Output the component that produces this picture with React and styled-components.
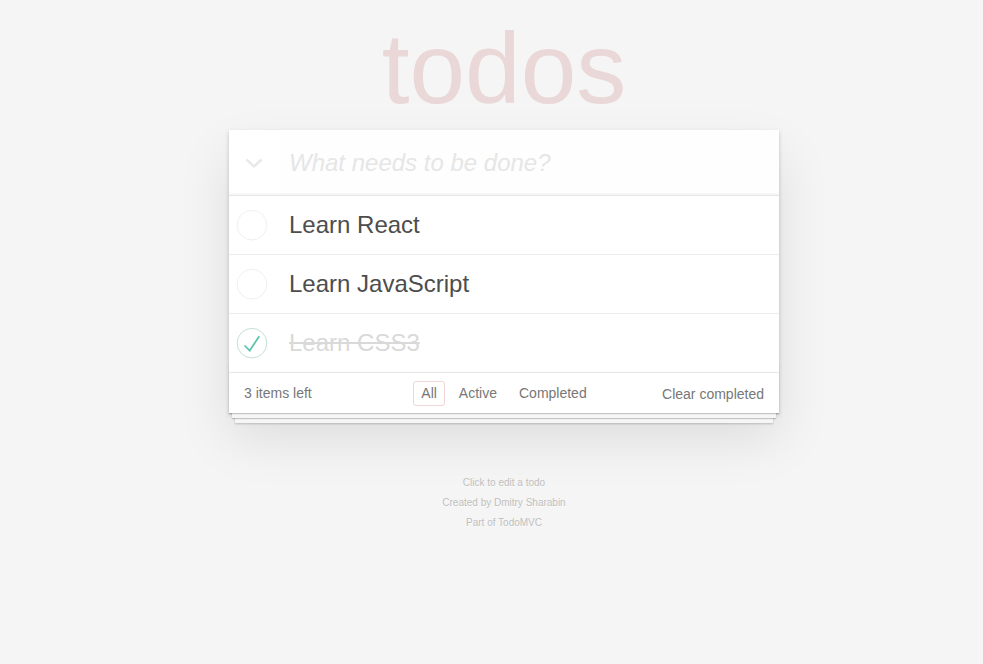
import { useState } from 'react';
import styled, { createGlobalStyle } from 'styled-components';

const GlobalStyle = createGlobalStyle`
  html, body {
    margin: 0;
    padding: 0;
  }
  body {
    font-family: "Liberation Sans", Arial, sans-serif;
    font-size: 14px;
    line-height: 1.4em;
    background: #f5f5f5;
    color: #4d4d4d;
    -webkit-font-smoothing: antialiased;
  }
`;

const Page = styled.div`
  padding: 18px 0 0 25px;
  min-height: 646px;
`;

const Column = styled.div`
  max-width: 550px;
  margin: 0 auto;
`;

const Title = styled.h1`
  margin: 0 0 12px;
  font-size: 100px;
  line-height: 100px;
  font-weight: 100;
  text-align: center;
  color: rgba(175, 47, 47, 0.15);
`;

const TodoApp = styled.section`
  background: #fff;
  box-shadow: 0 2px 4px rgba(0, 0, 0, 0.2), 0 25px 50px 0 rgba(0, 0, 0, 0.1);
`;

const Header = styled.header`
  display: flex;
  align-items: center;
  box-shadow: inset 0 -2px 1px rgba(0, 0, 0, 0.03);
`;

const ToggleAll = styled.button`
  width: 50px;
  align-self: stretch;
  display: flex;
  align-items: center;
  justify-content: center;
  border: 0;
  padding: 0;
  background: none;
  cursor: pointer;
`;

const NewTodo = styled.input`
  flex: 1;
  min-width: 0;
  margin: 0;
  border: 0;
  outline: none;
  padding: 16px 16px 16px 10px;
  font-family: inherit;
  font-size: 24px;
  line-height: 1.4em;
  height: 65px;
  box-sizing: border-box;
  color: inherit;
  background: rgba(0, 0, 0, 0.003);

  &::placeholder {
    font-style: italic;
    font-weight: 300;
    color: #e6e6e6;
  }
`;

const List = styled.ul`
  margin: 0;
  padding: 0;
  list-style: none;
  border-top: 1px solid #e6e6e6;
`;

const Item = styled.li`
  display: flex;
  align-items: center;
  font-size: 24px;
  border-bottom: 1px solid #ededed;

  &:last-child {
    border-bottom: none;
  }
`;

const Toggle = styled.button`
  width: 60px;
  height: 40px;
  flex: none;
  border: 0;
  padding: 0;
  background: none;
  cursor: pointer;
  display: flex;
  align-items: center;
`;

const Label = styled.label`
  flex: 1;
  padding: 15px 15px 15px 0;
  line-height: 28px;
  word-break: break-all;
  color: ${p => (p.$done ? '#d9d9d9' : '#4d4d4d')};
  text-decoration: ${p => (p.$done ? 'line-through' : 'none')};
`;

const Footer = styled.footer`
  position: relative;
  display: grid;
  grid-template-columns: 1fr auto 1fr;
  grid-template-rows: 20px;
  align-items: center;
  height: 20px;
  padding: 10px 15px;
  color: #777;
  border-top: 1px solid #e6e6e6;

  &::before {
    content: '';
    position: absolute;
    right: 0;
    bottom: 0;
    left: 0;
    height: 50px;
    overflow: hidden;
    pointer-events: none;
    box-shadow: 0 1px 1px rgba(0, 0, 0, 0.2), 0 8px 0 -3px #f6f6f6,
      0 9px 1px -3px rgba(0, 0, 0, 0.2), 0 16px 0 -6px #f6f6f6,
      0 17px 2px -6px rgba(0, 0, 0, 0.2);
  }
`;

const Count = styled.span`
  text-align: left;
  line-height: 20px;
`;

const Filters = styled.ul`
  display: flex;
  align-items: center;
  margin: 0;
  padding: 0;
  list-style: none;
`;

const FilterLink = styled.a`
  display: block;
  margin: 0 3px;
  padding: 3px 7px;
  line-height: 17px;
  color: inherit;
  text-decoration: none;
  cursor: pointer;
  border: 1px solid ${p => (p.$selected ? 'rgba(175, 47, 47, 0.2)' : 'transparent')};
  border-radius: 3px;

  &:hover {
    border-color: ${p => (p.$selected ? 'rgba(175, 47, 47, 0.2)' : 'rgba(175, 47, 47, 0.1)')};
  }
`;

const ClearButton = styled.button`
  justify-self: end;
  margin: 0;
  padding: 0;
  border: 0;
  background: none;
  font-family: inherit;
  font-size: 14px;
  line-height: 20px;
  color: inherit;
  position: relative;
  top: 1px;
  cursor: pointer;

  &:hover {
    text-decoration: underline;
  }
`;

const Info = styled.footer`
  margin: 65px auto 0;
  color: #bfbfbf;
  font-size: 10px;
  text-shadow: 0 1px 0 rgba(255, 255, 255, 0.5);
  text-align: center;

  p {
    margin: 10px 0;
    line-height: 1;
  }
`;

function CheckIcon({ done }) {
  return (
    <svg width="40" height="40" viewBox="-10 -18 100 135">
      <circle cx="50" cy="50" r="50" fill="none" stroke={done ? '#bddad5' : '#ededed'} strokeWidth="3" />
      {done && <path fill="#5dc2af" d="M72 25L42 71 27 56l-4 4 20 20 34-52z" />}
    </svg>
  );
}

const initialTodos = [
  { id: 1, title: 'Learn React', done: false },
  { id: 2, title: 'Learn JavaScript', done: false },
  { id: 3, title: 'Learn CSS3', done: true },
];

export default function App() {
  const [todos, setTodos] = useState(initialTodos);
  const [filter, setFilter] = useState('All');

  const toggle = id =>
    setTodos(todos.map(t => (t.id === id ? { ...t, done: !t.done } : t)));

  const shown = todos.filter(t =>
    filter === 'All' ? true : filter === 'Active' ? !t.done : t.done
  );

  return (
    <>
      <GlobalStyle />
      <Page>
        <Column>
          <Title>todos</Title>
          <TodoApp>
            <Header>
              <ToggleAll aria-label="Toggle all">
                <svg width="18" height="10" viewBox="0 0 18 10">
                  <polyline points="1.5,1.5 9,8.3 16.5,1.5" fill="none" stroke="#e8e8e8" strokeWidth="2.4" />
                </svg>
              </ToggleAll>
              <NewTodo placeholder="What needs to be done?" />
            </Header>
            <List>
              {shown.map(t => (
                <Item key={t.id}>
                  <Toggle onClick={() => toggle(t.id)}>
                    <CheckIcon done={t.done} />
                  </Toggle>
                  <Label $done={t.done}>{t.title}</Label>
                </Item>
              ))}
            </List>
            <Footer>
              <Count>{todos.length} items left</Count>
              <Filters>
                {['All', 'Active', 'Completed'].map(f => (
                  <li key={f}>
                    <FilterLink $selected={filter === f} onClick={() => setFilter(f)}>
                      {f}
                    </FilterLink>
                  </li>
                ))}
              </Filters>
              <ClearButton onClick={() => setTodos(todos.filter(t => !t.done))}>
                Clear completed
              </ClearButton>
            </Footer>
          </TodoApp>
          <Info>
            <p>Click to edit a todo</p>
            <p>Created by Dmitry Sharabin</p>
            <p>Part of TodoMVC</p>
          </Info>
        </Column>
      </Page>
    </>
  );
}
